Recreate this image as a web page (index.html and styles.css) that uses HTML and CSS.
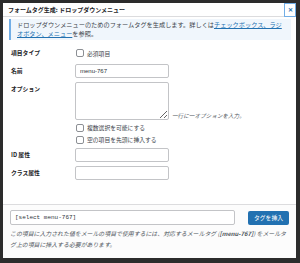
FILE: index.html
```html
<!DOCTYPE html>
<html lang="ja">
<head>
  <meta charset="UTF-8" />
  <meta name="viewport" content="width=device-width, initial-scale=1.0" />
  <title>フォームタグ生成: ドロップダウンメニュー</title>
  <link rel="stylesheet" href="styles.css">
</head>
<body>
  <div class="modal">
    <div class="modal-header">
      <h1>フォームタグ生成: ドロップダウンメニュー</h1>
      <button class="close" aria-label="閉じる">&#x2715;</button>
    </div>

    <div class="modal-body">
      <div class="notice">
        ドロップダウンメニューのためのフォームタグを生成します。詳しくは<a href="#">チェックボックス、ラジオボタン、メニュー</a>を参照。
      </div>

      <div class="form">
        <div class="label">項目タイプ</div>
        <div class="field">
          <label class="check"><span class="box"></span>必須項目</label>
        </div>

        <div class="label">名前</div>
        <div class="field">
          <input type="text" class="text" value="menu-767" />
        </div>

        <div class="label">オプション</div>
        <div class="field">
          <div class="options">
            <textarea class="area"></textarea>
            <span class="hint">一行に一オプションを入力。</span>
          </div>
          <label class="check"><span class="box"></span>複数選択を可能にする</label>
          <label class="check"><span class="box"></span>空の項目を先頭に挿入する</label>
        </div>

        <div class="label">ID 属性</div>
        <div class="field">
          <input type="text" class="text" />
        </div>

        <div class="label">クラス属性</div>
        <div class="field">
          <input type="text" class="text" />
        </div>
      </div>
    </div>

    <div class="insert-box">
      <div class="insert-row">
        <input type="text" class="tag" value="[select menu-767]" readonly />
        <button class="insert">タグを挿入</button>
      </div>
      <p class="mail-tag">この項目に入力された値をメールの項目で使用するには、対応するメールタグ (<strong>[menu-767]</strong>) をメールタグ上の項目に挿入する必要があります。</p>
    </div>
  </div>
</body>
</html>
```

FILE: styles.css
```css
body {
  margin: 0;
  padding: 3px;
  background: #2c2c2c;
  font-family: "Noto Sans CJK JP", "Noto Sans", sans-serif;
  color: #1d2327;
}

.modal {
  width: 293px;
  height: 255px;
  background: #fff;
  display: flex;
  flex-direction: column;
}

.modal-header {
  height: 13px;
  display: flex;
  align-items: center;
  justify-content: space-between;
  border-bottom: 1px solid #dcdcde;
}

h1 {
  margin: 0 0 0 5px;
  font-size: 6px;
  font-weight: 700;
}

.close {
  width: 12px;
  height: 14px;
  margin-top: 1px;
  padding: 0;
  border: 1px solid #72aee6;
  background: #fff;
  color: #2271b1;
  font-size: 6px;
  font-weight: 700;
  line-height: 1;
}

.modal-body {
  padding: 2px 5px 0 6px;
}

.notice {
  background: #f0f6fc;
  border-left: 2px solid #72aee6;
  padding: 1px 6px 2px 6px;
  font-size: 6.2px;
  line-height: 9px;
  color: #3c434a;
}

.notice a {
  color: #2271b1;
}

.form {
  display: grid;
  grid-template-columns: 64px 1fr;
  row-gap: 4px;
  margin-top: 6px;
  padding-left: 2px;
}

.label {
  font-size: 5.8px;
  font-weight: 700;
  line-height: 14px;
}

.field {
  display: flex;
  flex-direction: column;
  gap: 3px;
}

.check {
  display: flex;
  align-items: center;
  gap: 3px;
  font-size: 5.8px;
  line-height: 9px;
  color: #3c434a;
  padding-left: 1px;
}

.box {
  width: 8px;
  height: 8px;
  border: 1px solid #8c8f94;
  border-radius: 2px;
  box-sizing: border-box;
  background: #fff;
}

.form > .label:first-child + .field .check {
  height: 14px;
}

.text {
  width: 94px;
  height: 14px;
  box-sizing: border-box;
  border: 1px solid #c3c4c7;
  border-radius: 2px;
  padding: 0 4px;
  font-family: "Liberation Sans", sans-serif;
  font-size: 6px;
  color: #2c3338;
}

.options {
  display: flex;
  align-items: flex-end;
  gap: 3px;
}

.area {
  width: 94px;
  height: 38px;
  box-sizing: border-box;
  border: 1px solid #c3c4c7;
  border-radius: 2px;
  resize: vertical;
  margin: 0;
}

.hint {
  font-size: 5.6px;
  font-style: italic;
  color: #50575e;
  line-height: 8px;
}

.insert-box {
  margin-top: auto;
  height: 48px;
  border-top: 1px solid #dcdcde;
  background: #fcfcfc;
  padding: 5px 7px 0 7px;
}

.insert-row {
  display: flex;
  align-items: center;
  justify-content: space-between;
}

.tag {
  width: 225px;
  height: 15px;
  box-sizing: border-box;
  border: 1px solid #c3c4c7;
  border-radius: 2px;
  padding: 0 4px;
  font-family: "Liberation Mono", monospace;
  font-size: 6px;
  color: #2c3338;
  background: #fff;
}

.insert {
  width: 41px;
  height: 14px;
  padding: 0;
  border: none;
  border-radius: 2px;
  background: #2271b1;
  color: #fff;
  font-family: "Noto Sans CJK JP", sans-serif;
  font-size: 5.8px;
}

.mail-tag {
  margin: 3px 0 0 0;
  font-size: 5.9px;
  line-height: 11px;
  font-style: italic;
  color: #50575e;
}
```
